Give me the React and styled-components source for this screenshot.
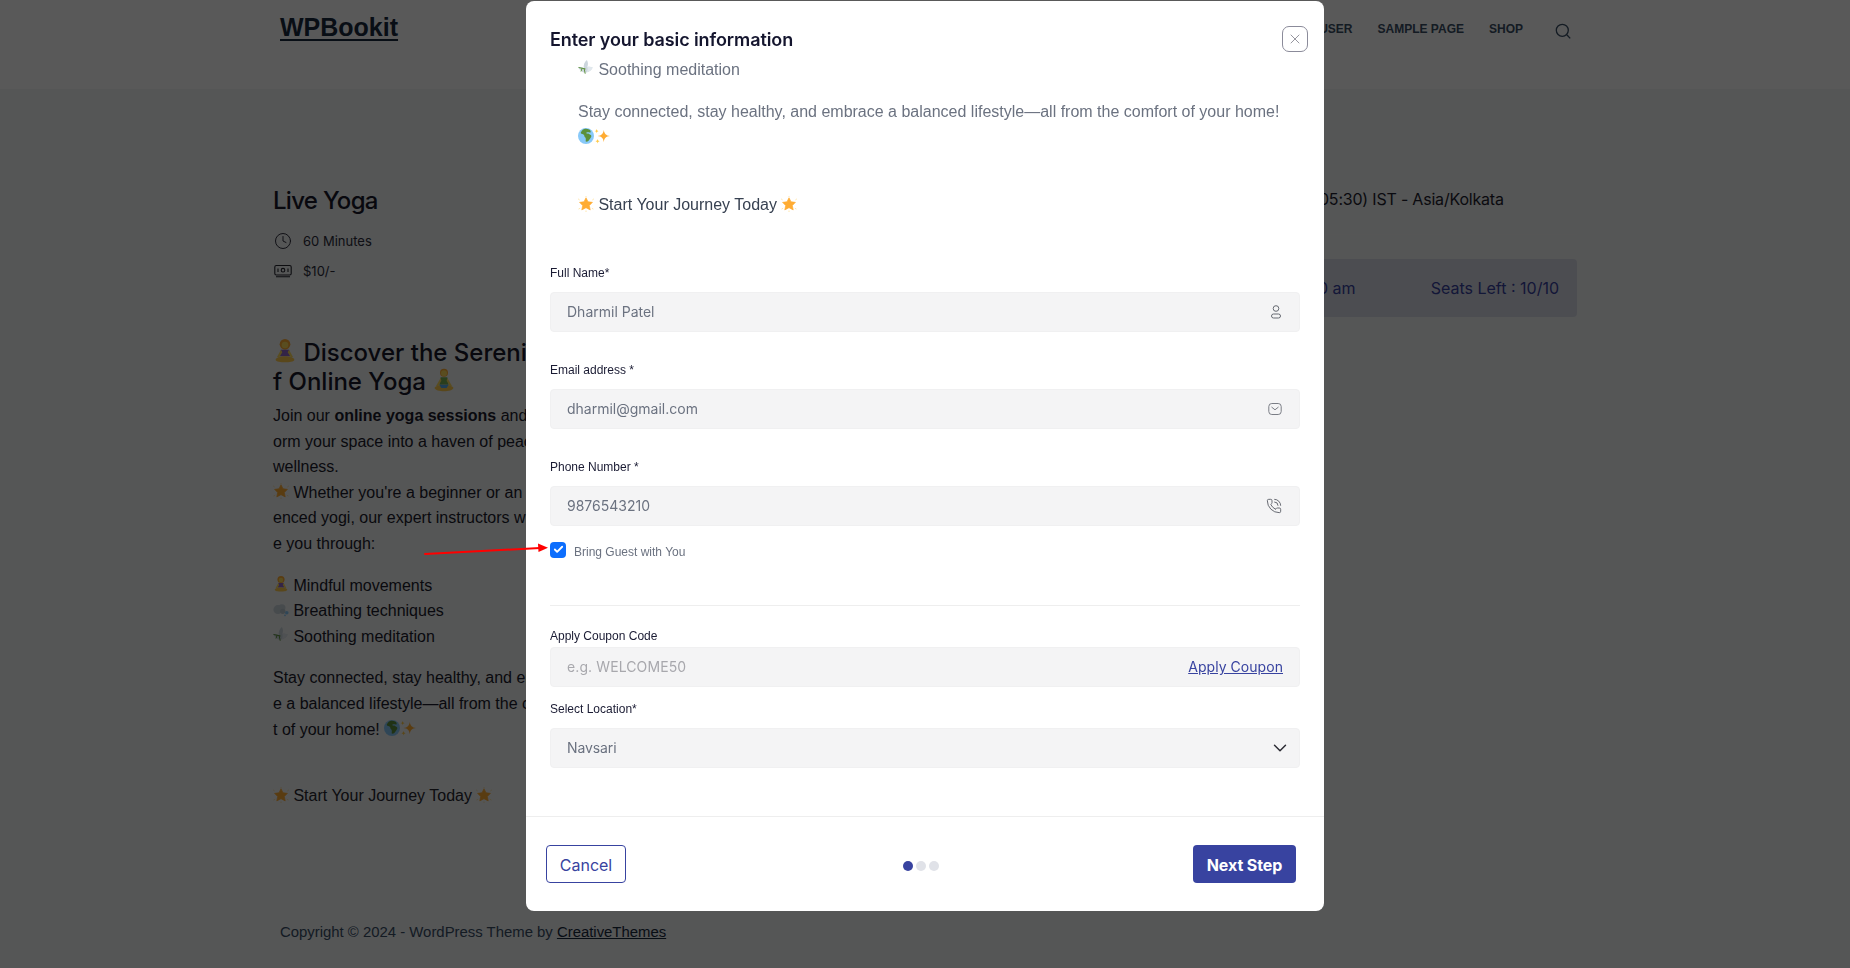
import React from 'react';
import styled, { createGlobalStyle } from 'styled-components';
import { Clock, PhoneCall, X, ChevronDown, Check } from 'lucide-react';

const sans = '"Liberation Sans", Arial, sans-serif';
const jakarta = 'Inter, "Noto Sans", sans-serif';
const brand = '#3843a0';

const GlobalStyle = createGlobalStyle`
  html, body {
    margin: 0;
    height: 100%;
    overflow: hidden;
    background: #f2f5f7;
    font-family: ${sans};
  }
  * { box-sizing: border-box; }
`;

const EmojiSvg = styled.svg`
  display: inline-block;
  width: 1em;
  height: 1em;
  vertical-align: -0.1em;
`;

const emojiParts = {
  star: (
    <>
      <path d="M18 4l4.500 9 10 1.300-7 7.200 2 9.800-9.500-5-9.500 5 2-9.800-7-7.200 10-1.300z" fill="#FFAC33" stroke="#FFAC33" strokeWidth="1.500" strokeLinejoin="round" />
      <path d="M18 0v1.500M18 33.500V36M1 7l2 1.500M35 7l-2 1.500M2 29l2-1M34 29l-2-1" stroke="#FFD983" strokeWidth="1.500" strokeLinecap="round" />
    </>
  ),
  earth: (
    <>
      <circle cx="18" cy="18" r="18" fill="#88C9F9" />
      <path d="M14 2c-3 1-7 5-8 9 2 3 5 2 7 4s1 5 3 6 2 6 1 9c3 2 6 0 8-3s5-6 5-9-4-3-6-5-3 1-5-1 4-3 7-2 3-2 2-4-5-5-14-4z" fill="#5C913B" />
    </>
  ),
  sparkles: (
    <>
      <path d="M22 4c1 9 5 13 14 14-9 1-13 5-14 14-1-9-5-13-14-14 9-1 13-5 14-14z" fill="#FFAC33" />
      <path d="M6 2c.6 3 2 4.400 5 5-3 .6-4.400 2-5 5-.6-3-2-4.400-5-5 3-.6 4.400-2 5-5zM8 25c.6 3 2 4.400 5 5-3 .6-4.400 2-5 5-.6-3-2-4.400-5-5 3-.6 4.400-2 5-5z" fill="#FFCC4D" />
    </>
  ),
  dove: (
    <>
      <path d="M20 0c3 5 3 11 1 16 3-1 8-1 12 1-2 6-8 10-14 11-5 1-9 0-11-4-4-2-6-4-7-7 4-2 9-1 12 1-1-6 1-13 7-18z" fill="#CCD6DD" />
      <path d="M21 16c3-1 8-1 12 1-2 6-8 10-14 11 3-3 3-8 2-12z" fill="#E1E8ED" />
      <path d="M2 17l14 3M14 20l2 10M9 19l-2 6" stroke="#5C913B" strokeWidth="2.200" strokeLinecap="round" fill="none" />
    </>
  ),
  dash: (
    <>
      <circle cx="11" cy="17" r="10" fill="#CCD6DD" />
      <circle cx="20" cy="13" r="8" fill="#CCD6DD" />
      <circle cx="22" cy="21" r="6" fill="#BBC8D1" />
      <circle cx="31" cy="24" r="4" fill="#88C9F9" />
      <circle cx="27" cy="30" r="2" fill="#88C9F9" />
    </>
  ),
  lotus: (
    <>
      <circle cx="18" cy="8" r="8" fill="#FFAC33" />
      <circle cx="18" cy="9" r="5" fill="#FFDC5D" />
      <path d="M12 16h12l2 10H10z" fill="#9268CA" />
      <path d="M12 16L6 27l3 1 5-8M24 16l6 11-3 1-5-8" fill="#FFDC5D" />
      <path d="M4 31c0-3 8-5 14-5s14 2 14 5-8 4-14 4-14-1-14-4z" fill="#FFCC4D" />
    </>
  ),
  lotusGreen: (
    <>
      <circle cx="18" cy="7" r="6" fill="#FFAC33" />
      <circle cx="18" cy="8" r="4.500" fill="#FFDC5D" />
      <path d="M13 14h10l2 11H11z" fill="#77B255" />
      <path d="M13 15L6 27l3 1 5-9M23 15l7 12-3 1-5-9" fill="#FFDC5D" />
      <path d="M4 30c0-3 8-5 14-5s14 2 14 5-8 5-14 5-14-2-14-5z" fill="#FFCC4D" />
      <path d="M11 25h14l-3 5h-8z" fill="#55ACEE" />
    </>
  ),
};

const Emoji = ({ kind }) => <EmojiSvg viewBox="0 0 36 36">{emojiParts[kind]}</EmojiSvg>;

// page behind the dialog
const Page = styled.div`
  height: 968px;
  display: flex;
  flex-direction: column;
  background: #f2f5f7;
  overflow: hidden;
`;

const SiteHeader = styled.header`
  height: 89px;
  background: #fff;
  padding: 0 279px 0 280px;
  display: flex;
  justify-content: space-between;
`;

const Logo = styled.a`
  font: 700 25px/30px ${sans};
  color: #192a3d;
  text-decoration: underline;
  text-decoration-thickness: 2px;
  text-underline-offset: 3px;
  margin-top: 12px;
  height: 30px;
`;

const Nav = styled.nav`
  display: flex;
  align-items: flex-start;
  gap: 25px;
  padding-top: 21px;
`;

const NavLink = styled.a`
  font: 700 12px/16px ${sans};
  color: #3a4f66;
  text-transform: uppercase;
`;

const SearchIcon = styled.svg`
  width: 16px;
  height: 16px;
  margin: 2px 0 0 7px;
`;

const Main = styled.main`
  flex: 1;
  padding: 96px 273px 0;
  display: flex;
  justify-content: space-between;
`;

const LeftColumn = styled.div`
  width: 300px;
  word-break: break-all;
  color: #1c1c2b;
`;

const ServiceTitle = styled.h1`
  margin: 0 0 9px;
  font: 500 24px/32px ${jakarta};
  letter-spacing: -0.7px;
  color: #171729;
`;

const MetaRow = styled.div`
  height: 30px;
  display: flex;
  align-items: center;
  gap: 11px;
  padding-left: 1px;
  font: 400 13px/1 ${jakarta};
  color: #2c2c3a;
  svg { width: 18px; height: 18px; flex: none; }
`;

const SectionTitle = styled.h2`
  margin: 53px 0 6.500px;
  font: 500 24px/28.800px ${jakarta};
  letter-spacing: 0;
  color: #171729;
`;

const Copy = styled.p`
  margin: 0 0 ${(p) => p.$after || 16}px;
  font: 400 16px/25.600px ${sans};
  color: ${(p) => p.$color || 'inherit'};
`;

const RightColumn = styled.div`
  width: 397px;
  padding-top: 2px;
`;

const TimezoneRow = styled.div`
  height: 48px;
  padding: 0 0 0 88px;
  font: 400 16px/24px ${jakarta};
  letter-spacing: -0.2px;
  color: #1f1f2e;
  border-bottom: 1px solid #f5f5f5;
`;

const SlotCard = styled.div`
  margin-top: 24px;
  height: 58px;
  padding: 0 18px;
  display: flex;
  align-items: center;
  justify-content: space-between;
  background: #dadce8;
  border-radius: 4px;
  font: 400 16px/1 ${jakarta};
  color: #3843a0;
`;

const SiteFooter = styled.footer`
  height: 48px;
  padding: 0 280px;
  font: 400 14.900px/24px ${sans};
  color: #3a4f66;
  a { color: #192a3d; text-decoration: underline; }
`;

// dialog
const Overlay = styled.div`
  position: fixed;
  inset: 0;
  padding-top: 1px;
  display: flex;
  justify-content: center;
  align-items: flex-start;
  background: rgba(0, 0, 0, 0.65);
`;

const Modal = styled.div`
  width: 798px;
  height: 910px;
  display: flex;
  flex-direction: column;
  background: #fff;
  border-radius: 8px;
  overflow: hidden;
`;

const ModalHeader = styled.div`
  height: 51px;
  flex: none;
  padding: 25px 16px 0 24px;
  display: flex;
  align-items: center;
  justify-content: space-between;
`;

const ModalTitle = styled.h3`
  margin: 1px 0 0;
  font: 600 18px/26px ${jakarta};
  letter-spacing: -0.1px;
  color: #14152e;
`;

const CloseButton = styled.button`
  width: 26px;
  height: 26px;
  padding: 0;
  display: flex;
  align-items: center;
  justify-content: center;
  background: #fff;
  border: 1px solid #8b8b9a;
  border-radius: 7px;
  color: #6f6f7c;
`;

const ModalBody = styled.div`
  flex: 1;
  min-height: 0;
  overflow: hidden;
  padding: 0 24px;
`;

const Description = styled.div`
  margin-top: -21px;
  padding: 0 0 0 28px;
  font: 400 16px/25.500px ${sans};
  color: #6b7280;
`;

const DescLine = styled.p`
  margin: 0 0 ${(p) => p.$after || 0}px;
  color: ${(p) => p.$color || 'inherit'};
`;

const Label = styled.label`
  display: block;
  margin-top: ${(p) => p.$top}px;
  margin-bottom: ${(p) => p.$bottom ?? 11}px;
  font: 400 12px/16px ${sans};
  color: #1a1b33;
`;

const FieldBox = styled.div`
  height: 40px;
  padding: 0 ${(p) => p.$right ?? 17}px 0 16px;
  display: flex;
  align-items: center;
  justify-content: space-between;
  background: #f4f4f5;
  border: 1px solid #f0f0f1;
  border-radius: 4px;
  color: #5c6068;
`;

const FieldInput = styled.input`
  flex: 1;
  min-width: 0;
  padding: 1px 0 0;
  border: 0;
  outline: 0;
  background: transparent;
  font: 400 14px/20px ${jakarta};
  letter-spacing: 0;
  color: #6b7280;
  &::placeholder { color: #a8a8ad; opacity: 1; letter-spacing: 0.1px; }
`;

const SelectValue = styled.span`
  padding-top: 1px;
  font: 400 14px/20px ${jakarta};
  letter-spacing: -0.1px;
  color: #6b7280;
`;

const CheckRow = styled.div`
  margin-top: 16px;
  height: 16px;
  display: flex;
  align-items: flex-start;
  gap: 8px;
`;

const CheckBox = styled.span`
  width: 16px;
  height: 16px;
  display: flex;
  align-items: center;
  justify-content: center;
  background: #0d6efd;
  border-radius: 4px;
  color: #fff;
`;

const CheckText = styled.span`
  font: 400 12px/16px ${sans};
  color: #6b7280;
  padding-top: 2px;
`;

const Divider = styled.hr`
  margin: 47px 0 0;
  border: 0;
  border-top: 1px solid #eeeeee;
`;

const CouponLink = styled.a`
  padding-top: 1px;
  font: 400 14px/20px ${jakarta};
  letter-spacing: 0.05px;
  color: ${brand};
  text-decoration: underline;
`;

const ModalFooter = styled.div`
  flex: none;
  height: 95px;
  padding: 28px 28px 0 20px;
  display: grid;
  grid-template-columns: 1fr auto 1fr;
  align-items: start;
  border-top: 1px solid #eeeeee;
`;

const GhostButton = styled.button`
  justify-self: start;
  width: 80px;
  height: 38px;
  padding: 2px 0 0;
  background: #fff;
  border: 1px solid ${brand};
  border-radius: 4px;
  font: 400 16px/1 ${jakarta};
  color: ${brand};
`;

const PrimaryButton = styled.button`
  justify-self: end;
  width: 103px;
  height: 38px;
  padding: 2px 0 0;
  background: ${brand};
  border: 0;
  border-radius: 4px;
  font: 700 16px/1 ${jakarta};
  letter-spacing: -0.1px;
  color: #fff;
`;

const Dots = styled.div`
  display: flex;
  gap: 3px;
  padding-top: 16px;
`;

const Dot = styled.span`
  width: 10px;
  height: 10px;
  border-radius: 50%;
  background: ${(p) => (p.$active ? brand : '#e0e2e8')};
`;

const ArrowMark = styled.svg`
  position: fixed;
  left: 420px;
  top: 538px;
  width: 132px;
  height: 22px;
`;

const PersonIcon = () => (
  <svg width="12" height="14" viewBox="0 0 12 14" fill="none" stroke="#666a72" strokeWidth="1">
    <circle cx="6" cy="3.500" r="2.800" />
    <rect x="1.500" y="9" width="9" height="4" rx="2" />
  </svg>
);

const MailIcon = () => (
  <svg width="14" height="14" viewBox="0 0 14 14" fill="none" stroke="#7a7d85" strokeWidth="1">
    <rect x="0.800" y="1.500" width="12.400" height="11" rx="3" />
    <path d="M3.500 5l3.500 2.800L10.500 5" />
  </svg>
);

const BanknoteIcon = () => (
  <svg viewBox="0 0 18 14" fill="none" stroke="#26262f" strokeWidth="1.100">
    <rect x="0.800" y="1.500" width="16.400" height="9.500" rx="1.500" />
    <circle cx="9" cy="6.200" r="1.800" />
    <path d="M4 4.500v3.500M14 4.500v3.500M2 12.800h14" />
  </svg>
);

export default function App() {
  return (
    <>
      <GlobalStyle />
      <Page>
        <SiteHeader>
          <Logo>WPBookit</Logo>
          <Nav>
            <NavLink>User</NavLink>
            <NavLink>Sample Page</NavLink>
            <NavLink>Shop</NavLink>
            <SearchIcon viewBox="0 0 16 16" fill="none" stroke="#3a4f66" strokeWidth="1.300">
              <circle cx="7.300" cy="7.300" r="6" />
              <path d="M11.800 11.800l3.400 3.600" />
            </SearchIcon>
          </Nav>
        </SiteHeader>
        <Main>
          <LeftColumn>
            <ServiceTitle>Live Yoga</ServiceTitle>
            <MetaRow>
              <Clock strokeWidth={1.300} />
              60 Minutes
            </MetaRow>
            <MetaRow>
              <BanknoteIcon />
              $10/-
            </MetaRow>
            <SectionTitle>
              <Emoji kind="lotus" /> Discover the Serenity o
              <br />
              f Online Yoga <Emoji kind="lotusGreen" />
            </SectionTitle>
            <Copy>
              Join our <strong>online yoga sessions</strong> and transform your space into a haven of peace and wellness.
              <br />
              <Emoji kind="star" /> Whether you're a beginner or an experienced yogi, our expert instructors will guide you through:
            </Copy>
            <Copy>
              <Emoji kind="lotus" /> Mindful movements
              <br />
              <Emoji kind="dash" /> Breathing techniques
              <br />
              <Emoji kind="dove" /> Soothing meditation
            </Copy>
            <Copy $after={41}>
              Stay connected, stay healthy, and embrace a balanced lifestyle—all from the comfort of your home! <Emoji kind="earth" />
              <Emoji kind="sparkles" />
            </Copy>
            <Copy $color="#26262e">
              <Emoji kind="star" /> Start Your Journey Today <Emoji kind="star" />
            </Copy>
          </LeftColumn>
          <RightColumn>
            <TimezoneRow>(GMT+05:30) IST - Asia/Kolkata</TimezoneRow>
            <SlotCard>
              <span>09:00 am - 10:00 am</span>
              <span>Seats Left : 10/10</span>
            </SlotCard>
          </RightColumn>
        </Main>
        <SiteFooter>
          Copyright © 2024 - WordPress Theme by <a>CreativeThemes</a>
        </SiteFooter>
      </Page>

      <Overlay>
        <Modal>
          <ModalHeader>
            <ModalTitle>Enter your basic information</ModalTitle>
            <CloseButton>
              <X size={16} strokeWidth={1.100} />
            </CloseButton>
          </ModalHeader>
          <ModalBody>
            <Description>
              <DescLine>
                <Emoji kind="dash" /> Breathing techniques
              </DescLine>
              <DescLine $after={17}>
                <Emoji kind="dove" /> Soothing meditation
              </DescLine>
              <DescLine $after={42}>
                Stay connected, stay healthy, and embrace a balanced lifestyle—all from the comfort of your home!
                <br />
                <Emoji kind="earth" />
                <Emoji kind="sparkles" />
              </DescLine>
              <DescLine $color="#374151">
                <Emoji kind="star" /> Start Your Journey Today <Emoji kind="star" />
              </DescLine>
            </Description>

            <Label $top={47}>Full Name*</Label>
            <FieldBox>
              <FieldInput readOnly value="Dharmil Patel" />
              <PersonIcon />
            </FieldBox>

            <Label $top={30}>Email address *</Label>
            <FieldBox>
              <FieldInput readOnly value="dharmil@gmail.com" />
              <MailIcon />
            </FieldBox>

            <Label $top={30}>Phone Number *</Label>
            <FieldBox>
              <FieldInput readOnly value="9876543210" />
              <PhoneCall size={16} strokeWidth={1.400} />
            </FieldBox>

            <CheckRow>
              <CheckBox>
                <Check size={11} strokeWidth={4} />
              </CheckBox>
              <CheckText>Bring Guest with You</CheckText>
            </CheckRow>

            <Divider />

            <Label $top={22} $bottom={3}>Apply Coupon Code</Label>
            <FieldBox $right={16}>
              <FieldInput readOnly placeholder="e.g. WELCOME50" />
              <CouponLink>Apply Coupon</CouponLink>
            </FieldBox>

            <Label $top={14}>Select Location*</Label>
            <FieldBox $right={8}>
              <SelectValue>Navsari</SelectValue>
              <ChevronDown size={22} strokeWidth={1.600} color="#2b2b33" />
            </FieldBox>
          </ModalBody>
          <ModalFooter>
            <GhostButton>Cancel</GhostButton>
            <Dots>
              <Dot $active />
              <Dot />
              <Dot />
            </Dots>
            <PrimaryButton>Next Step</PrimaryButton>
          </ModalFooter>
        </Modal>
      </Overlay>

      <ArrowMark viewBox="0 0 132 22">
        <path d="M5 16L120 10" stroke="#f00" strokeWidth="2" strokeLinecap="round" />
        <path d="M118 5.500L128 9.700 118.500 14z" fill="#f00" />
      </ArrowMark>
    </>
  );
}
